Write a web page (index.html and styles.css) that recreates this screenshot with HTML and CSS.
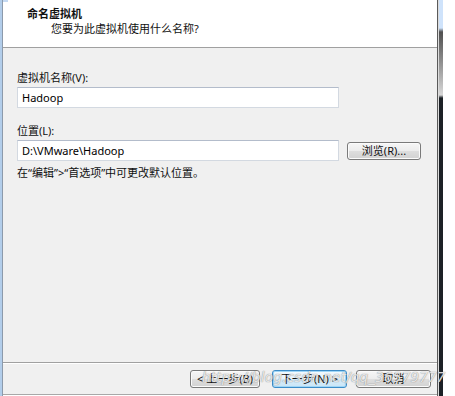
FILE: index.html
```html
<!DOCTYPE html>
<html lang="zh-CN">
<head>
<meta charset="utf-8">
<title>新建虚拟机向导</title>
<link rel="stylesheet" href="styles.css">
</head>
<body>
<div class="screen">
  <div class="frame-left"></div>
  <div class="dialog">
    <span class="corner-icon"></span>
    <div class="header">
      <div class="title">命名虚拟机</div>
      <div class="subtitle">您要为此虚拟机使用什么名称?</div>
    </div>
    <div class="content">
      <div class="label">虚拟机名称(V):</div>
      <div class="row">
        <div class="input">Hadoop</div>
      </div>
      <div class="label label-gap">位置(L):</div>
      <div class="row">
        <div class="input">D:\VMware\Hadoop</div>
        <div class="btn btn-browse">浏览(R)...</div>
      </div>
      <div class="note">在“编辑”&gt;“首选项”中可更改默认位置。</div>
    </div>
    <div class="footer">
      <div class="btn btn-back">&lt; 上一步(B)</div>
      <div class="btn btn-next">下一步(N) &gt;</div>
      <div class="btn btn-cancel">取消</div>
      <span class="watermark">https://blog.csdn.net/qq_36579777</span>
    </div>
  </div>
  <div class="frame-right"><div class="strip"></div></div>
  <div class="outside"></div>
</div>
</body>
</html>
```
FILE: styles.css
```css
html, body {
  margin: 0;
  padding: 0;
  background: #ffffff;
}
body {
  font-family: "Noto Sans", "Noto Sans CJK SC", sans-serif;
  font-size: 11px;
  color: #111;
}
.screen {
  display: flex;
  width: 455px;
  height: 396px;
  overflow: hidden;
}
.frame-left {
  width: 2px;
  background: #b2cdea;
  border-right: 1px solid #8c9aab;
}
.dialog {
  position: relative;
  width: 434px;
  height: 394px;
  display: flex;
  flex-direction: column;
  background: #f0f0f0;
  border-bottom: 1px solid #a8a8a8;
}
.corner-icon {
  position: absolute;
  left: 0;
  top: 0;
  width: 5px;
  height: 2px;
  background: #c4d9f2;
}
.header {
  height: 48px;
  background: #ffffff;
  border-bottom: 1px solid #a0a0a0;
  box-sizing: border-box;
  padding: 6px 0 0 24px;
}
.title {
  font-weight: bold;
  line-height: 15px;
}
.subtitle {
  line-height: 15px;
  padding-left: 24px;
}
.content {
  flex: 1;
  padding: 22px 0 0 14px;
}
.label {
  line-height: 15px;
}
.label-gap {
  margin-top: 15px;
}
.row {
  display: flex;
  align-items: center;
  margin-top: 2px;
}
.input {
  width: 322px;
  height: 21px;
  box-sizing: border-box;
  background: #ffffff;
  border: 1px solid #d3d9e1;
  border-top-color: #b3bccb;
  padding: 0 0 0 4px;
  line-height: 19px;
  color: #000;
}
.btn {
  box-sizing: border-box;
  height: 18px;
  border: 1px solid #7a7a7a;
  border-radius: 3px;
  background: linear-gradient(#f6f6f6 0%, #ececec 50%, #dedede 51%, #d2d2d2 100%);
  box-shadow: inset 0 0 0 1px #fbfbfb;
  text-align: center;
  line-height: 16px;
  color: #111;
}
.btn-browse {
  width: 74px;
  margin-left: 8px;
}
.note {
  margin-top: 4px;
  line-height: 15px;
}
.footer {
  position: relative;
  height: 32px;
  border-top: 1px solid #a0a0a0;
  box-shadow: inset 0 1px 0 #ffffff;
  display: flex;
  justify-content: flex-end;
  align-items: flex-start;
  padding: 7px 6px 0 0;
  box-sizing: border-box;
}
.btn-back {
  width: 70px;
}
.btn-next {
  width: 75px;
  margin-left: 12px;
  border-color: #3c8cc8;
  background: linear-gradient(#f4fafe 0%, #e6f3fb 50%, #d6ecf9 51%, #cbe6f7 100%);
  box-shadow: inset 0 0 0 1px #9fd6f6;
}
.btn-cancel {
  width: 75px;
  margin-left: 9px;
}
.watermark {
  position: absolute;
  left: 199px;
  top: 6px;
  font-family: "DejaVu Sans", sans-serif;
  font-size: 13.5px;
  font-style: italic;
  letter-spacing: 0.2px;
  color: rgba(255, 255, 255, 0.8);
  text-shadow: 0 0 1px rgba(90, 90, 90, 0.6), 0 0 1px rgba(90, 90, 90, 0.4);
  white-space: nowrap;
  pointer-events: none;
}
.frame-right {
  width: 6px;
  border-left: 1px solid #5a5a5a;
  box-sizing: border-box;
  display: flex;
}
.strip {
  flex: 1;
  background: linear-gradient(#cfe3fb 0px, #cfe3fb 28px, #505050 32px, #8a8a8a 60px, #d8d8d8 95px, #1c2126 98px, #1c2126 100%);
  border-left: 1px solid #dcdcdc;
}
.outside {
  flex: 1;
  background: #ffffff;
}
```
